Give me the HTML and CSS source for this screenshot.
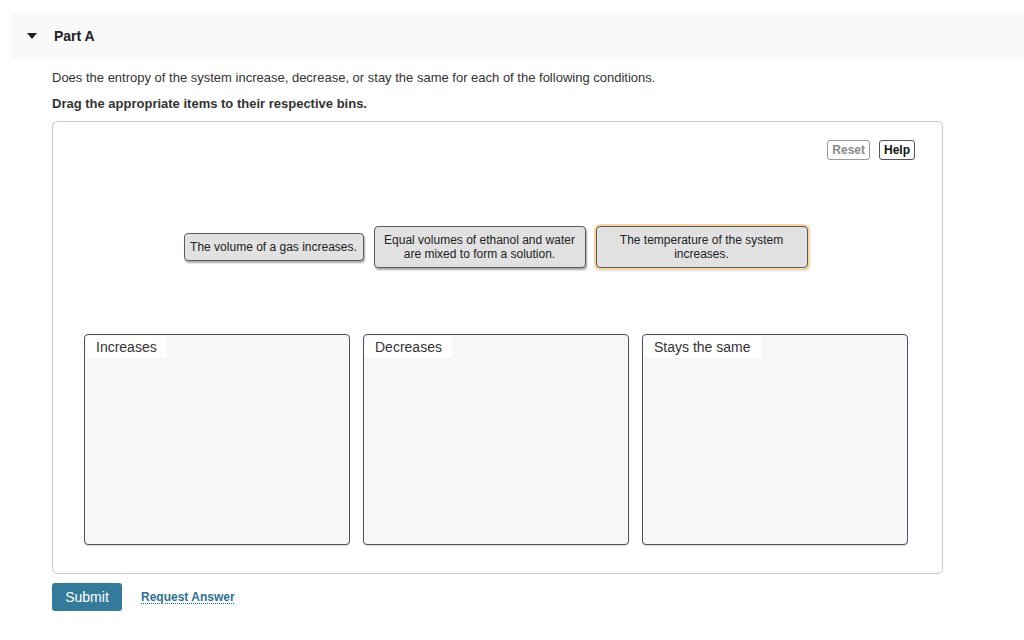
FILE: index.html
```html
<!DOCTYPE html>
<html>
<head>
<meta charset="utf-8">
<link rel="stylesheet" href="styles.css">
</head>
<body>
<div class="part-header">
  <span class="caret"></span>
  <span class="part-title">Part A</span>
</div>
<div class="content">
  <p class="question">Does the entropy of the system increase, decrease, or stay the same for each of the following conditions.</p>
  <p class="instruction">Drag the appropriate items to their respective bins.</p>
  <div class="board">
    <div class="toolbar">
      <button class="tool reset">Reset</button>
      <button class="tool help">Help</button>
    </div>
    <div class="items">
      <div class="item short">The volume of a gas increases.</div>
      <div class="item">Equal volumes of ethanol and water<br>are mixed to form a solution.</div>
      <div class="item focused">The temperature of the system<br>increases.</div>
    </div>
    <div class="bins">
      <div class="bin"><span class="bin-label">Increases</span></div>
      <div class="bin"><span class="bin-label">Decreases</span></div>
      <div class="bin"><span class="bin-label">Stays the same</span></div>
    </div>
  </div>
  <div class="actions">
    <button class="submit">Submit</button>
    <a class="request" href="#">Request Answer</a>
  </div>
</div>
</body>
</html>
```
FILE: styles.css
```css
html, body {
  margin: 0;
  padding: 0;
  background: #fff;
  font-family: "Liberation Sans", Arial, Helvetica, sans-serif;
  color: #333;
}
.part-header {
  margin: 13px 0 0 12px;
  height: 46px;
  background: #f9f9f9;
  display: flex;
  align-items: center;
}
.caret {
  width: 0;
  height: 0;
  margin-left: 15px;
  border-left: 5px solid transparent;
  border-right: 5px solid transparent;
  border-top: 6px solid #222;
}
.part-title {
  margin-left: 17px;
  font-weight: bold;
  font-size: 14px;
  color: #222;
}
.content {
  padding-left: 52px;
}
.question {
  margin: 11px 0 0 0;
  font-size: 13px;
  line-height: 15px;
  color: #333;
}
.instruction {
  margin: 11px 0 0 0;
  font-size: 13px;
  line-height: 15px;
  font-weight: bold;
  color: #333;
}
.board {
  margin-top: 10px;
  width: 889px;
  height: 451px;
  border: 1px solid #c8c8c8;
  border-radius: 5px;
  display: flex;
  flex-direction: column;
}
.toolbar {
  display: flex;
  justify-content: flex-end;
  gap: 9px;
  padding: 18px 27px 0 0;
}
.tool {
  font-family: "Liberation Sans", Arial, sans-serif;
  font-size: 12px;
  font-weight: bold;
  height: 20px;
  padding: 0 4px;
  background: #fff;
  border-radius: 3px;
  line-height: 18px;
}
.reset {
  color: #8a8a8a;
  border: 1px solid #9a9a9a;
}
.help {
  color: #111;
  border: 1px solid #555;
}
.items {
  margin-top: 66px;
  height: 42px;
  padding-right: 4px;
  display: flex;
  justify-content: center;
  align-items: center;
  gap: 10px;
}
.item {
  box-sizing: border-box;
  width: 212px;
  height: 42px;
  background: #e1e1e1;
  border: 1px solid #5a5a5a;
  border-radius: 4px;
  box-shadow: 1px 2px 2px rgba(0,0,0,0.35);
  font-size: 12px;
  line-height: 14px;
  color: #222;
  text-align: center;
  display: flex;
  align-items: center;
  justify-content: center;
}
.item.short {
  width: 180px;
  height: 28px;
}
.item.focused {
  box-shadow: 0 0 0 2px #f7d6a3, 1px 2px 3px rgba(0,0,0,0.3);
}
.bins {
  margin-top: 66px;
  padding-left: 31px;
  display: flex;
  gap: 13px;
}
.bin {
  box-sizing: border-box;
  width: 266px;
  height: 211px;
  background: #f7f7f7;
  border: 1px solid #524f66;
  border-radius: 4px;
  box-shadow: 0 1px 1px rgba(0,0,0,0.15);
  padding: 1px 0 0 1px;
}
.bin-label {
  display: inline-block;
  background: #fff;
  padding: 4px 10px 3px 10px;
  font-size: 14px;
  line-height: 15px;
  color: #333;
}
.actions {
  margin-top: 9px;
  display: flex;
  align-items: center;
  gap: 19px;
}
.submit {
  width: 70px;
  height: 28px;
  background: #337a9b;
  color: #fff;
  border: none;
  border-radius: 3px;
  font-family: "Liberation Sans", Arial, sans-serif;
  font-size: 14px;
}
.request {
  color: #2d6f90;
  font-weight: bold;
  font-size: 12px;
  text-decoration: underline dotted;
  text-underline-offset: 2px;
}
```
